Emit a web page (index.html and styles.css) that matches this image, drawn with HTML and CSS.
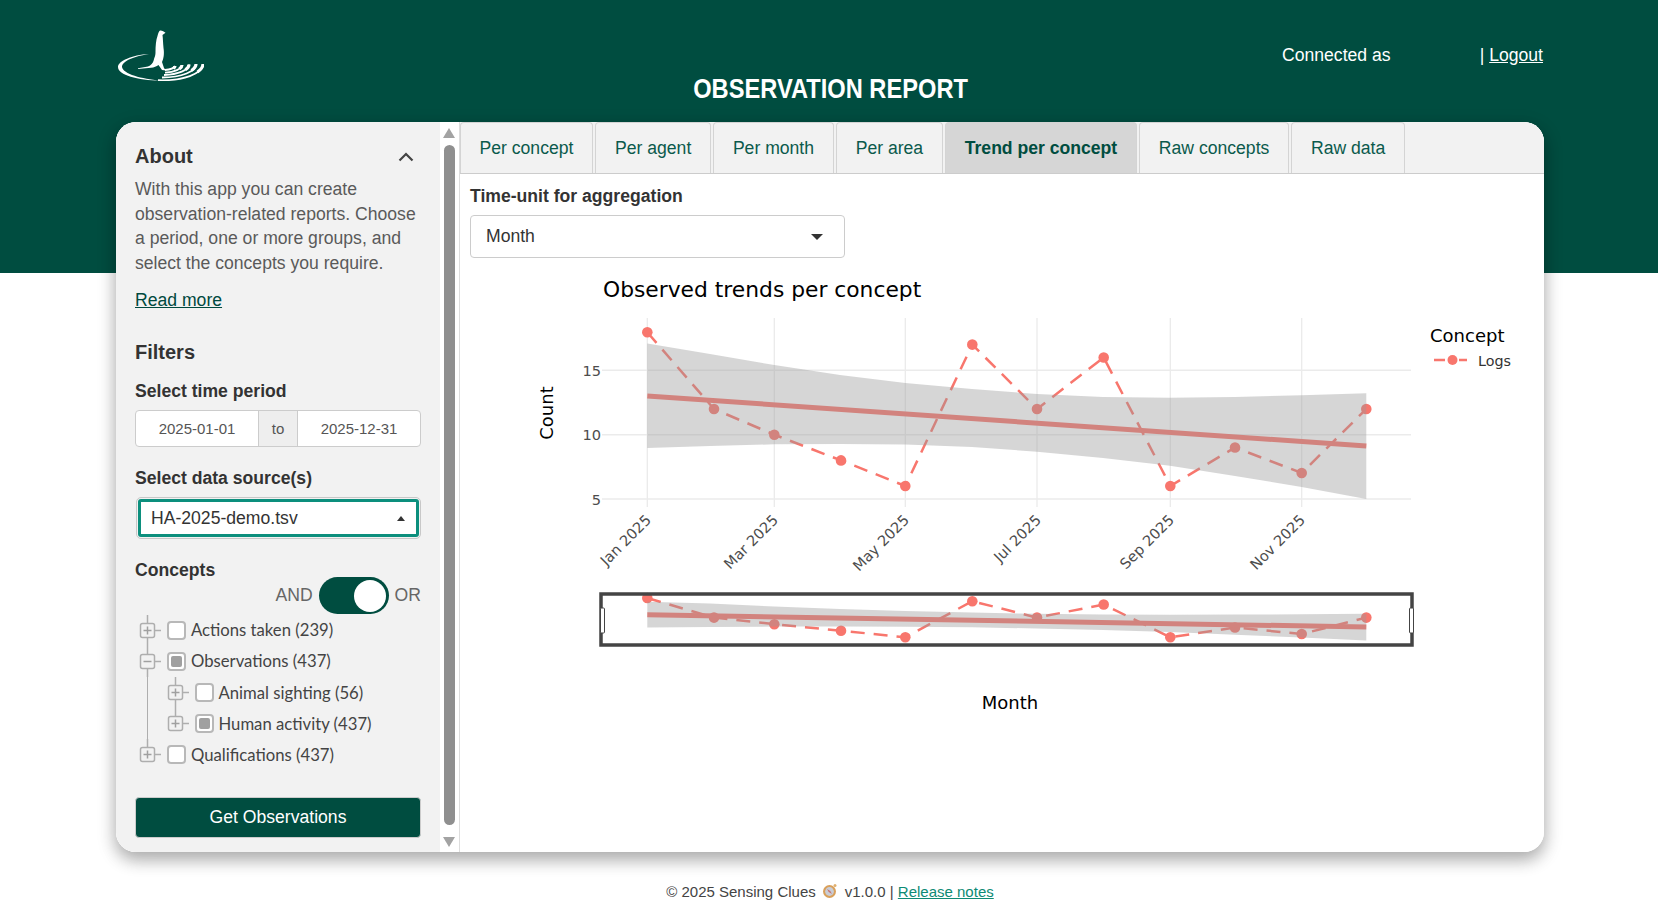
FILE: index.html
```html
<!DOCTYPE html>
<html lang="en">
<head>
<meta charset="utf-8">
<title>Observation report</title>
<link rel="stylesheet" href="styles.css">
</head>
<body>
<header class="top">
  <svg class="logo" viewBox="0 0 86 51" aria-hidden="true">
    <path class="logo-fill" d="M42 .5C44 .3 46 1.500 47.500 2.800L44.500 5C45 9 45 13 45.500 18C46.500 24 45.500 29 44 32L46 38L48 40.500L44 40L40.500 35C38.500 36.500 36 37.500 33 37.800L20 39V38.200L30 36.500C33 35.500 35 33 35.800 30C36.500 27 37.500 26 37.500 22C37.500 16 38 10 39.500 6C40 4 40.500 1.500 42 .5Z"/>
    <path class="logo-fill" d="M31 24C14 25 0 31 0 37C0 45 20 50.500 42 50.500C24 49 5 44 4 37C4 31 17 26 31 24Z"/>
    <path class="logo-rip" d="M85 34A41 16 0 0 1 40 50.200M78 34A34 13 0 0 1 44 47.500M71 34.500A27 10.500 0 0 1 46 45M64 35A20 8 0 0 1 47 42.700M57 36A13 5 0 0 1 47 40"/>
    <path class="logo-blob" d="M85 34A41 16 0 0 1 79.500 42M78 34A34 13 0 0 1 73.400 40.500M71 34.500A27 10.500 0 0 1 67.400 39.750M64 35A20 8 0 0 1 61.300 39M57 36A13 5 0 0 1 55.300 38.500"/>
  </svg>
  <h1 class="app-title">OBSERVATION REPORT</h1>
  <div class="top-user">
    <span class="conn">Connected as</span>
    <span>| <a class="logout" href="#">Logout</a></span>
  </div>
</header>

<main class="card">
  <aside class="side">
    <div class="side-body">
      <div class="about-head">
        <h2 class="h-side">About</h2>
        <svg class="chev" viewBox="0 0 16 10" aria-hidden="true"><path d="M1.500 8.500 8 2l6.500 6.500"/></svg>
      </div>
      <p class="about-text">With this app you can create observation-related reports. Choose a period, one or more groups, and select the concepts you require.</p>
      <a class="read-more" href="#">Read more</a>
      <h2 class="h-side h-filters">Filters</h2>
      <div class="lbl lbl-period">Select time period</div>
      <div class="date-range">
        <span class="date-cell">2025-01-01</span>
        <span class="date-to">to</span>
        <span class="date-cell">2025-12-31</span>
      </div>
      <div class="lbl lbl-source">Select data source(s)</div>
      <div class="src-select">
        <span>HA-2025-demo.tsv</span>
        <i class="caret-up"></i>
      </div>
      <div class="lbl lbl-concepts">Concepts</div>
      <div class="switch-row">
        <span>AND</span>
        <span class="switch"><i class="knob"></i></span>
        <span>OR</span>
      </div>
      <div class="tree">
        <div class="node">
          <svg class="exp" viewBox="0 0 24 31"><path class="tl" d="M9.500 0V31M16 15.500H23"/><rect class="tb" x="2.500" y="8.500" width="14" height="14" rx="2"/><path class="tp" d="M5.500 15.500H13.500M9.500 11.500V19.500"/></svg>
          <i class="cb"></i><span class="node-t">Actions taken (239)</span>
        </div>
        <div class="node">
          <svg class="exp" viewBox="0 0 24 31"><path class="tl" d="M9.500 0V31M16 15.500H23"/><rect class="tb" x="2.500" y="8.500" width="14" height="14" rx="2"/><path class="tp" d="M5.500 15.500H13.500"/></svg>
          <i class="cb cb-mix"></i><span class="node-t">Observations (437)</span>
        </div>
        <div class="sub">
          <div class="node">
            <svg class="exp" viewBox="0 0 24 31"><path class="tl" d="M9.500 0V31M16 15.500H23"/><rect class="tb" x="2.500" y="8.500" width="14" height="14" rx="2"/><path class="tp" d="M5.500 15.500H13.500M9.500 11.500V19.500"/></svg>
            <i class="cb"></i><span class="node-t">Animal sighting (56)</span>
          </div>
          <div class="node">
            <svg class="exp" viewBox="0 0 24 31"><path class="tl" d="M9.500 0V15.500M16 15.500H23"/><rect class="tb" x="2.500" y="8.500" width="14" height="14" rx="2"/><path class="tp" d="M5.500 15.500H13.500M9.500 11.500V19.500"/></svg>
            <i class="cb cb-mix"></i><span class="node-t">Human activity (437)</span>
          </div>
        </div>
        <div class="node">
          <svg class="exp" viewBox="0 0 24 31"><path class="tl" d="M9.500 0V15.500M16 15.500H23"/><rect class="tb" x="2.500" y="8.500" width="14" height="14" rx="2"/><path class="tp" d="M5.500 15.500H13.500M9.500 11.500V19.500"/></svg>
          <i class="cb"></i><span class="node-t">Qualifications (437)</span>
        </div>
      </div>
      <button class="get-btn" type="button">Get Observations</button>
    </div>
    <div class="scroll">
      <i class="sc-up"></i>
      <i class="sc-thumb"></i>
      <i class="sc-down"></i>
    </div>
  </aside>

  <section class="content">
    <nav class="tabs">
      <a class="tab" href="#">Per concept</a>
      <a class="tab" href="#">Per agent</a>
      <a class="tab" href="#">Per month</a>
      <a class="tab" href="#">Per area</a>
      <a class="tab tab-on" href="#">Trend per concept</a>
      <a class="tab" href="#">Raw concepts</a>
      <a class="tab" href="#">Raw data</a>
    </nav>
    <div class="pane">
      <div class="lbl lbl-unit">Time-unit for aggregation</div>
      <div class="unit-select"><span>Month</span><i class="caret-down"></i></div>
      <svg class="chart" viewBox="460 270 1084 582" aria-label="Observed trends per concept">
        <text class="t-title" x="603" y="297">Observed trends per concept</text>
        <text class="t-axis" transform="translate(553 413) rotate(-90)" text-anchor="middle">Count</text>

        <path class="grid" d="M647.300 318V507M774.300 318V507M905.300 318V507M1037 318V507M1170.300 318V507M1301.700 318V507"/>
        <path class="grid gridh" d="M602 370.300H1411M602 434.700H1411M602 499H1411"/>

        <path class="pts-line" d="M647.300 332.300L714 409L774.300 434.700L841 460.400L905.300 486L972.300 344.600L1037 409L1103.700 357.500L1170.300 486L1235 447.500L1301.700 473L1366.300 409"/>
        <g class="dots">
          <circle cx="647.300" cy="332.300" r="5"/><circle cx="714" cy="409" r="5"/><circle cx="774.300" cy="434.700" r="5"/><circle cx="841" cy="460.400" r="5"/><circle cx="905.300" cy="486" r="5"/><circle cx="972.300" cy="344.600" r="5"/><circle cx="1037" cy="409" r="5"/><circle cx="1103.700" cy="357.500" r="5"/><circle cx="1170.300" cy="486" r="5"/><circle cx="1235" cy="447.500" r="5"/><circle cx="1301.700" cy="473" r="5"/><circle cx="1366.300" cy="409" r="5"/>
        </g>
        <path class="trend" d="M647.300 396L1366.300 446"/>
        <path class="ribbon" d="M647.300 343.500L710 354L774.300 365L840 375L905.300 383L972 389L1037 394L1103 397L1170 397.700L1235 397L1301.700 395.300L1366.300 393.300V499L1301.700 487L1235 476L1170 465.700L1103 458L1037 451.700L972 447L905.300 444.500L840 444L774.300 444.300L710 446L647.300 448Z"/>

        <g class="t-tick">
          <text x="601" y="375.500" text-anchor="end">15</text>
          <text x="601" y="440" text-anchor="end">10</text>
          <text x="601" y="504.500" text-anchor="end">5</text>
          <text transform="translate(652 521) rotate(-45)" text-anchor="end">Jan 2025</text>
          <text transform="translate(779 521) rotate(-45)" text-anchor="end">Mar 2025</text>
          <text transform="translate(910 521) rotate(-45)" text-anchor="end">May 2025</text>
          <text transform="translate(1042 521) rotate(-45)" text-anchor="end">Jul 2025</text>
          <text transform="translate(1175 521) rotate(-45)" text-anchor="end">Sep 2025</text>
          <text transform="translate(1306 521) rotate(-45)" text-anchor="end">Nov 2025</text>
        </g>

        <text class="t-axis" x="1430" y="342">Concept</text>
        <path class="leg-line" d="M1434 360H1445M1459 360H1467"/>
        <circle class="leg-dot" cx="1452.500" cy="360" r="5"/>
        <text class="t-leg" x="1478" y="366">Logs</text>

        <rect class="range-bg" x="601" y="594" width="811" height="51"/>
        <path class="pts-line" d="M647.300 598L714 617.600L774.300 624.200L841 630.700L905.300 637.300L972.300 601.200L1037 617.600L1103.700 604.500L1170.300 637.300L1235 627.500L1301.700 634L1366.300 617.600"/>
        <g class="dots">
          <circle cx="647.300" cy="598" r="5"/><circle cx="714" cy="617.600" r="5"/><circle cx="774.300" cy="624.200" r="5"/><circle cx="841" cy="630.700" r="5"/><circle cx="905.300" cy="637.300" r="5"/><circle cx="972.300" cy="601.200" r="5"/><circle cx="1037" cy="617.600" r="5"/><circle cx="1103.700" cy="604.500" r="5"/><circle cx="1170.300" cy="637.300" r="5"/><circle cx="1235" cy="627.500" r="5"/><circle cx="1301.700" cy="634" r="5"/><circle cx="1366.300" cy="617.600" r="5"/>
        </g>
        <path class="trend" d="M647.300 614.700L1366.300 627"/>
        <path class="ribbon" d="M647.300 601.700L710 603.600L774.300 606.500L840 609L905.300 611L972 612.600L1037 613.800L1103 614.600L1170 614.800L1235 614.600L1301.700 614.200L1366.300 613.700V640.600L1301.700 637.500L1235 634.700L1170 632.100L1103 630.100L1037 628.500L972 627.300L905.300 626.700L840 626.600L774.300 626.600L710 627.100L647.300 627.600Z"/>
        <rect class="range-frame" x="601" y="594" width="811" height="51"/>
        <rect class="handle" x="600.500" y="608" width="4" height="25" rx="1"/>
        <rect class="handle" x="1409.500" y="608" width="4" height="25" rx="1"/>

        <text class="t-axis" x="1010" y="708.500" text-anchor="middle">Month</text>
      </svg>
    </div>
  </section>
</main>

<footer class="foot">
  <span>© 2025 Sensing Clues</span>
  <svg class="compass" viewBox="0 0 16 16" aria-hidden="true">
    <circle cx="7.500" cy="8.500" r="6.500" fill="#d9a05b"/>
    <circle cx="7.500" cy="8.500" r="4.400" fill="#c9cdd6"/>
    <path d="M5 6l3.300 2 1.700 3-3.300-2z" fill="#c9736f"/>
    <circle cx="13" cy="2.500" r="1.500" fill="#e0b070"/>
  </svg>
  <span>v1.0.0 | <a class="rel" href="#">Release notes</a></span>
</footer>
</body>
</html>
```
FILE: styles.css
```css
* { box-sizing: border-box; }
html, body { margin: 0; padding: 0; }
body {
  width: 1658px;
  height: 908px;
  overflow: hidden;
  background: #fff;
  font-family: "Liberation Sans", Arial, sans-serif;
  font-size: 17.6px;
  color: #333;
}
.top {
  height: 273px;
  background: #004d40;
  color: #fff;
  display: grid;
  grid-template-columns: 1fr auto 1fr;
  align-items: start;
  padding: 30px 116px 0 116px;
}
.logo { width: 86px; height: 51px; margin-left: 2px; }
.logo-fill { fill: #fff; }
.logo-rip { fill: none; stroke: #fff; stroke-width: 1.800; }
.logo-blob { fill: none; stroke: #fff; stroke-width: 3.200; }
.app-title {
  margin: 42px 0 0 4px;
  font-family: "Liberation Sans", sans-serif;
  font-size: 28px;
  font-weight: 700;
  line-height: 34px;
  color: #fff;
  white-space: nowrap;
  transform: scaleX(.845);
}
.top-user {
  display: flex;
  width: 261px;
  margin-right: -1px;
  justify-self: end;
  justify-content: space-between;
  padding-top: 15px;
  line-height: 20px;
  font-size: 17.6px;
}
.logout { color: #fff; }

.card {
  position: relative;
  display: flex;
  width: 1428px;
  height: 730px;
  margin: -151px 0 0 116px;
  border-radius: 20px;
  background: #fff;
  box-shadow: 0 8px 16px rgba(0,0,0,.2), 0 6px 20px rgba(0,0,0,.19);
  overflow: hidden;
}
.side { display: flex; width: 344px; flex: none; background: #fff; }
.side-body {
  width: 324px;
  flex: none;
  background: #f2f2f2;
  padding: 23px 19px 0 19px;
}
.about-head { display: flex; justify-content: space-between; align-items: center; height: 23px; padding-right: 7px; }
.h-side { margin: 0; font-size: 20px; font-weight: 700; line-height: 23px; color: #333; }
.chev { width: 16px; height: 10px; }
.chev path { fill: none; stroke: #444; stroke-width: 2.200; }
.about-text { margin: 9px 0 0; line-height: 24.640px; color: #5a5a5a; }
.read-more { display: block; margin-top: 12px; line-height: 25px; color: #00493e; }
.h-filters { margin-top: 28px; }
.lbl { font-weight: 700; color: #333; line-height: 22px; }
.lbl-period { margin-top: 16px; }
.date-range {
  display: flex;
  width: 286px;
  height: 37px;
  margin-top: 8px;
  border: 1px solid #ccc;
  border-radius: 4px;
  background: #fff;
  font-size: 15px;
  color: #555;
  overflow: hidden;
}
.date-cell { flex: 1; display: flex; align-items: center; justify-content: center; }
.date-to {
  width: 40px;
  flex: none;
  display: flex;
  align-items: center;
  justify-content: center;
  background: #eee;
  border-left: 1px solid #ccc;
  border-right: 1px solid #ccc;
}
.lbl-source { margin-top: 20px; }
.src-select {
  display: flex;
  align-items: center;
  justify-content: space-between;
  width: 281px;
  height: 38px;
  margin: 10.500px 0 2.500px 2.500px;
  padding: 0 11px 0 10.500px;
  border: 3px solid #0c8f7d;
  outline: 1px solid #c8c8c8;
  outline-offset: 1px;
  border-radius: 3px;
  background: #fff;
  color: #333;
}
.caret-up { width: 0; height: 0; border: 4.500px solid transparent; border-top: 0; border-bottom: 5px solid #333; }
.caret-down { width: 0; height: 0; border: 6px solid transparent; border-bottom: 0; border-top: 6px solid #333; }
.lbl-concepts { margin-top: 22px; }
.switch-row {
  display: flex;
  justify-content: flex-end;
  align-items: center;
  gap: 6px;
  height: 37px;
  margin-top: -4px;
  color: #666;
}
.switch {
  display: flex;
  justify-content: flex-end;
  align-items: center;
  width: 70px;
  height: 37px;
  padding-right: 3px;
  border-radius: 19px;
  background: #004d40;
}
.knob { width: 32px; height: 32px; border-radius: 50%; background: #fff; }
.tree { margin-top: .5px; margin-left: 3px; font-family: "Lato", sans-serif; font-size: 16.700px; color: #444; }
.node { display: flex; align-items: center; height: 31.200px; }
.exp { width: 24px; height: 31px; flex: none; }
.tl { fill: none; stroke: #aeaeae; stroke-width: 1.500; }
.tb { fill: #f2f2f2; stroke: #aeaeae; stroke-width: 1.500; }
.tp { fill: none; stroke: #a0a0a0; stroke-width: 1.500; }
.cb {
  display: flex;
  align-items: center;
  justify-content: center;
  width: 19px;
  height: 19px;
  margin: 0 5px 0 5px;
  flex: none;
  border: 2px solid #b8b8b8;
  border-radius: 4px;
  background: #fff;
}
.cb-mix::after { content: ""; width: 11px; height: 11px; border-radius: 2px; background: #a0a0a0; }
.sub { position: relative; padding-left: 27.500px; }
.sub::before { content: ""; position: absolute; left: 9px; top: 0; bottom: 0; border-left: 1.500px solid #aeaeae; }
.get-btn {
  display: block;
  width: 286px;
  height: 41px;
  margin-top: 26.500px;
  border: 1px solid #ccc;
  border-radius: 4px;
  background: #004d40;
  color: #fff;
  font: inherit;
}
.scroll { position: relative; flex: 1; display: flex; flex-direction: column; align-items: center; padding-top: 6px; padding-right: 1px; border-right: 1px solid #ddd; }
.sc-up { width: 0; height: 0; border: 6.500px solid transparent; border-top: 0; border-bottom: 10px solid #a3a3a3; }
.sc-thumb { width: 11px; height: 680px; margin-top: 7px; border-radius: 6px; background: #8f8f8f; }
.sc-down { width: 0; height: 0; margin-top: 12px; border: 6.500px solid transparent; border-bottom: 0; border-top: 10px solid #a3a3a3; }

.content { flex: 1; min-width: 0; background: #fff; }
.tabs {
  display: flex;
  gap: 2.600px;
  height: 52px;
  background: #f2f2f2;
  border-bottom: 1px solid #ccc;
}
.tab {
  display: flex;
  align-items: center;
  padding: 0 18.500px;
  border: 1px solid #d4d4d4;
  border-bottom: 0;
  border-radius: 4px 4px 0 0;
  background: #f2f2f2;
  font-size: 17.600px;
  color: #0b5a4c;
  text-decoration: none;
}
.tab-on { background: #d6d6d6; font-weight: 700; color: #004d40; }
.pane { padding: 11px 0 0 10px; }
.lbl-unit { line-height: 22px; }
.unit-select {
  display: flex;
  align-items: center;
  justify-content: space-between;
  width: 375px;
  height: 43px;
  margin-top: 8px;
  padding: 0 21px 0 15px;
  border: 1px solid #ccc;
  border-radius: 4px;
  background: #fff;
}
.chart {
  position: absolute;
  left: 344px;
  top: 148px;
  width: 1084px;
  height: 582px;
}
.t-title { font-family: "DejaVu Sans", sans-serif; font-size: 21.800px; fill: #000; }
.t-axis { font-family: "DejaVu Sans", sans-serif; font-size: 18px; fill: #000; }
.t-tick { font-family: "DejaVu Sans", sans-serif; font-size: 14.600px; fill: #4d4d4d; }
.t-leg { font-family: "DejaVu Sans", sans-serif; font-size: 14.300px; fill: #333; }
.grid { fill: none; stroke: #ebebeb; stroke-width: 1.300; }
.gridh { stroke-width: 1.500; }
.pts-line { fill: none; stroke: #f8766d; stroke-width: 2.500; stroke-dasharray: 14 9; }
.dots circle { fill: #f8766d; r: 5.300px; }
.trend { fill: none; stroke: #f8766d; stroke-width: 5; }
.ribbon { fill: rgba(153,153,153,.4); }
.leg-line { fill: none; stroke: #f8766d; stroke-width: 2.500; }
.leg-dot { fill: #f8766d; }
.range-bg { fill: #fff; }
.range-frame { fill: none; stroke: #444; stroke-width: 3.500; }
.handle { fill: #fff; stroke: #444; stroke-width: 1; }

.foot {
  display: flex;
  justify-content: center;
  align-items: center;
  gap: 6.500px;
  height: 56px;
  padding-top: 22px;
  padding-left: 2px;
  font-size: 15px;
  color: #444;
}
.compass { width: 16px; height: 16px; }
.rel { color: #0e8a74; }
```
